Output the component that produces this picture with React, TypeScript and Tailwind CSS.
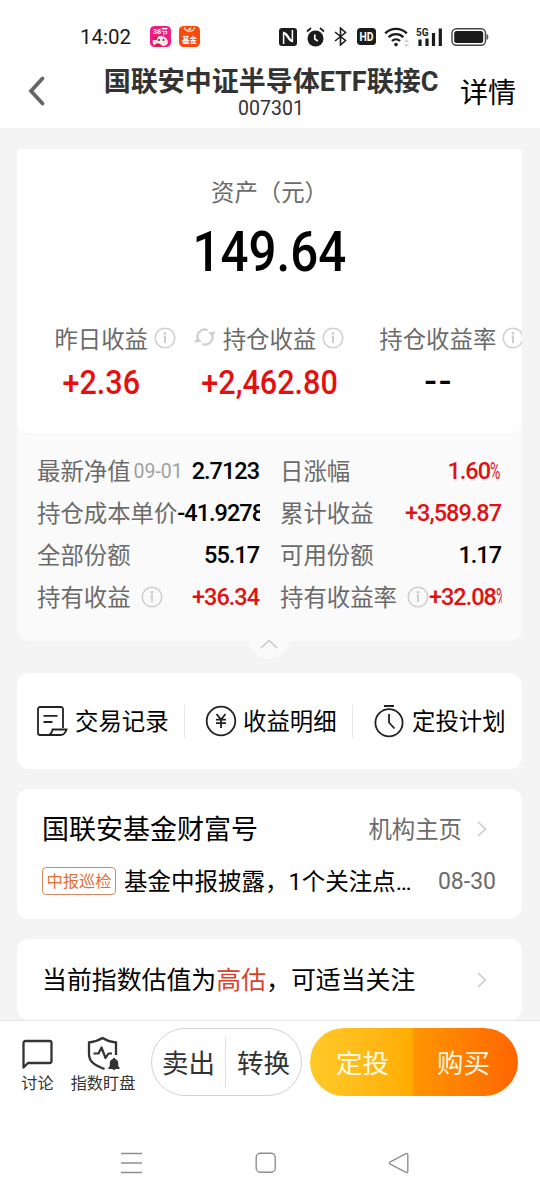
import type { ReactNode } from 'react';

type Tone = 'red' | 'black';

interface DetailItem {
  label: string;
  date?: string;
  info?: boolean;
  value: string;
  percent?: boolean;
  tone: Tone;
}

const leftDetails: DetailItem[] = [
  { label: '最新净值', date: '09-01', value: '2.7123', tone: 'black' },
  { label: '持仓成本单价', value: '-41.9278', tone: 'black' },
  { label: '全部份额', value: '55.17', tone: 'black' },
  { label: '持有收益', info: true, value: '+36.34', tone: 'red' },
];

const rightDetails: DetailItem[] = [
  { label: '日涨幅', value: '1.60', percent: true, tone: 'red' },
  { label: '累计收益', value: '+3,589.87', tone: 'red' },
  { label: '可用份额', value: '1.17', tone: 'black' },
  { label: '持有收益率', info: true, value: '+32.08', percent: true, tone: 'red' },
];

const toneClass: Record<Tone, string> = {
  red: 'text-[#df1112]',
  black: 'text-black',
};

function InfoIcon() {
  return (
    <svg width="22" height="22" viewBox="0 0 22 22" fill="none" className="shrink-0">
      <circle cx="11" cy="11" r="9.8" stroke="#cfcfcf" strokeWidth="1.5" />
      <circle cx="11" cy="6.3" r="1.4" fill="#cfcfcf" />
      <path d="M9.6 9.6H11V16" stroke="#cfcfcf" strokeWidth="2" />
    </svg>
  );
}

function RefreshIcon() {
  return (
    <svg width="22" height="20" viewBox="0 0 22 20" fill="none">
      <path d="M4.2 13A7.400 7.400 0 0 1 13.600 3M17.800 7A7.400 7.400 0 0 1 8.400 17" stroke="#cfcfcf" strokeWidth="2.2" />
      <path d="M14 5.200 21.800 4.400 18.600 9.600ZM8 14.800.2 15.600 3.400 10.400Z" fill="#cfcfcf" />
    </svg>
  );
}

function ChevronRight() {
  return (
    <svg width="10" height="16" viewBox="0 0 10 16" fill="none" className="shrink-0">
      <path d="m1 1 7.4 7L1 15" stroke="#cdcdcd" strokeWidth="1.7" />
    </svg>
  );
}

function StatusBar() {
  return (
    <div className="flex h-[58px] items-center pt-[15px] pl-20">
      <span className="w-[70px] pt-px text-[20.5px] leading-none text-[#1a1a1a]">14:02</span>
      <svg width="21" height="21" viewBox="0 0 21 21">
        <rect width="21" height="21" rx="4.5" fill="#ee1b82" />
        <text x="10.5" y="8" textAnchor="middle" fontSize="7" fontWeight="700" fill="#fff">
          38节
        </text>
        <path d="M3 18c-1.5-4 2-8 7-8s9 3.5 7.5 8l-3 2H6Z" fill="#fbe4e6" />
        <path d="M2.5 14c1-3 3.5-4.5 6-4l-2 4ZM5 20c0-2.5 2-3.500 5-2l3 2.500H5Z" fill="#d91b4d" />
        <circle cx="9" cy="14" r="1" fill="#333" />
        <circle cx="13.5" cy="14" r="1" fill="#333" />
      </svg>
      <svg width="21" height="21" viewBox="0 0 21 21" className="ml-2">
        <rect width="21" height="21" rx="4.5" fill="#fb4a0a" />
        <path d="M5.3 1.2a5.3 5.3 0 0 0 10.4 0" fill="none" stroke="#ffd9c4" strokeWidth="1.3" />
        <path d="m8 3.4 4.5-2.200L11 4.800Z" fill="#fff" />
        <text x="10.5" y="16.5" textAnchor="middle" fontSize="7.5" fontWeight="700" fill="#fff">
          基金
        </text>
      </svg>

      {/* NFC */}
      <svg width="18" height="18" viewBox="0 0 18 18" className="ml-[79px]">
        <rect width="18" height="18" rx="3" fill="#1c1c1c" />
        <path d="M4.600 16V4.500c4 .5 4.500 5.500 8 8M13.400 2V13.500c-4-.5-4.500-5.500-8-8" fill="none" stroke="#fff" strokeWidth="1.500" />
      </svg>
      {/* alarm */}
      <svg width="19" height="20" viewBox="0 0 19 20" className="ml-[9px]">
        <circle cx="9.5" cy="11.5" r="8" fill="#1c1c1c" />
        <path d="M1 4.500 5 1M18 4.500 14 1" stroke="#1c1c1c" strokeWidth="1.7" />
        <path d="M8.800 7.500v4.500l3 2" fill="none" stroke="#fff" strokeWidth="1.7" />
      </svg>
      {/* bluetooth */}
      <svg width="13" height="19" viewBox="0 0 13 19" className="ml-[9px]" fill="none">
        <path d="m1 5 10.500 8.500L6.500 18V1l5 4.500L1 14" stroke="#1c1c1c" strokeWidth="1.6" />
      </svg>
      <svg width="19" height="17" viewBox="0 0 19 17" className="ml-[10px]">
        <rect width="19" height="17" rx="3.5" fill="#1c1c1c" />
        <text x="9.5" y="12.8" textAnchor="middle" fontSize="12" fontWeight="700" fill="#fff" textLength="14" lengthAdjust="spacingAndGlyphs">
          HD
        </text>
      </svg>
      {/* wifi */}
      <svg width="26" height="20" viewBox="0 0 26 20" className="ml-[8px]" fill="none">
        <path d="M1.200 6.300a15.500 15.500 0 0 1 21.600 0M4.600 10.200a10.500 10.500 0 0 1 14.800 0M8 14a5.800 5.800 0 0 1 8 0" stroke="#1c1c1c" strokeWidth="2.4" />
        <circle cx="12" cy="17.600" r="1.8" fill="#1c1c1c" />
        <path d="m22.500 12 2.800 3h-5.600ZM22.500 20l2.800-3h-5.600Z" fill="#d3d3d3" />
      </svg>
      {/* mobile signal */}
      <svg width="27" height="20" viewBox="0 0 27 20" className="ml-[6px]">
        <path d="M4 12.500V19M11 11.500V19M17.500 6V19M24.300 1.500V19" stroke="#1c1c1c" strokeWidth="3.2" />
        <text x="0" y="9" fontSize="11" fontWeight="700" fill="#1c1c1c" textLength="12.5" lengthAdjust="spacingAndGlyphs">
          5G
        </text>
      </svg>
      <svg width="38" height="18" viewBox="0 0 38 18" className="ml-[8px]">
        <rect x="1" y="0.8" width="33.5" height="16.4" rx="4.5" fill="#fff" stroke="#444" strokeWidth="1.4" />
        <rect x="3.200" y="3" width="29" height="12" rx="2.500" fill="#1c1c1c" />
        <path d="M35.500 6c2.500.5 2.500 5.500 0 6Z" fill="#555" />
      </svg>
    </div>
  );
}

function Header() {
  return (
    <header className="flex h-[70px] items-start">
      <svg width="76" height="66" viewBox="0 0 76 66" fill="none" className="shrink-0">
        <path d="M42.500 20.500 31 33l11.500 12.500" stroke="#666" strokeWidth="3.8" strokeLinecap="round" />
      </svg>
      <div className="flex w-[390px] shrink-0 flex-col items-center pt-[9px] text-[#333]">
        <h1 className="text-[27px] leading-[30px] font-bold whitespace-nowrap">国联安中证半导体ETF联接C</h1>
        <p className="text-[19.5px] leading-6">007301</p>
      </div>
      <span className="-ml-1.5 pt-[22px] text-[28px] leading-7 text-black">详情</span>
    </header>
  );
}

function Metric({ label, leading, trailing, children }: { label: string; leading?: ReactNode; trailing?: ReactNode; children: ReactNode }) {
  return (
    <div className="flex flex-1 flex-col items-center">
      <div className="relative pt-[2px] text-[23.4px] leading-6 whitespace-nowrap text-[#6b6b6b]">
        {leading && <span className="absolute top-[1px] right-full mr-[7px]">{leading}</span>}
        {label}
        {trailing && <span className="absolute top-[1px] left-full ml-[6px]">{trailing}</span>}
      </div>
      {children}
    </div>
  );
}

function DetailRow({ item }: { item: DetailItem }) {
  return (
    <div className="flex h-[42px] items-center overflow-hidden whitespace-nowrap">
      <span className="shrink-0 pt-[3px] text-[23.4px] text-[#6b6b6b]">{item.label}</span>
      {item.date && <span className="ml-[3px] shrink-0 pt-px text-[19.5px] text-[#a0a0a0]">{item.date}</span>}
      {item.info && (
        <span className="-mt-px ml-[10px] shrink-0">
          <InfoIcon />
        </span>
      )}
      <span className={`ml-auto flex shrink-0 pt-[2px] pr-px text-[23.5px] font-medium tracking-[-1px] ${toneClass[item.tone]}`}>
        {item.value}
        {item.percent && <span className="w-[11px] origin-left scale-x-[0.6] font-normal">%</span>}
      </span>
    </div>
  );
}

function AssetCard() {
  return (
    <section className="relative h-[492px] rounded-xl bg-[#fafafa]">
      <div className="flex h-[284px] flex-col items-center overflow-hidden rounded-t-sm rounded-b-xl bg-white pt-8">
        <p className="text-[23.4px] leading-6 text-[#6b6b6b]">资产（元）</p>
        <p className="mt-[15px] scale-x-[0.88] text-[56px] leading-[64px] font-medium text-black">149.64</p>
        <div className="mt-[42px] flex w-full">
          <Metric label="昨日收益" trailing={<InfoIcon />}>
            <p className="mt-[11px] scale-x-[0.94] text-[32.5px] leading-10 font-medium text-[#e60f10]">+2.36</p>
          </Metric>
          <Metric label="持仓收益" leading={<RefreshIcon />} trailing={<InfoIcon />}>
            <p className="mt-[11px] scale-x-[0.94] text-[32.5px] leading-10 font-medium text-[#e60f10]">+2,462.80</p>
          </Metric>
          <Metric label="持仓收益率" trailing={<InfoIcon />}>
            <p className="mt-[10px] scale-x-[1.15] pl-0.5 text-[32.5px] leading-10 font-medium tracking-[1.5px] text-black">--</p>
          </Metric>
        </div>
      </div>
      <div className="grid grid-cols-[223px_222px] gap-x-5 px-5 pt-[17px]">
        <div>
          {leftDetails.map((item) => (
            <DetailRow key={item.label} item={item} />
          ))}
        </div>
        <div>
          {rightDetails.map((item) => (
            <DetailRow key={item.label} item={item} />
          ))}
        </div>
      </div>
      <div className="absolute bottom-[-18px] left-[231px] flex h-[42px] w-[42px] items-center justify-center rounded-full bg-[#fafafa] pt-[12px]">
        <svg width="18" height="10" viewBox="0 0 18 10" fill="none">
          <path d="m1 9 8-7.500L17 9" stroke="#c8c8c8" strokeWidth="1.5" />
        </svg>
      </div>
    </section>
  );
}

function ActionsCard() {
  return (
    <section className="mt-8 flex h-24 items-center rounded-xl bg-white text-[23.4px] whitespace-nowrap text-black">
      <div className="flex h-[33px] w-[168px] items-center border-r border-[#e6e6e6] pl-5">
        <svg width="31" height="30" viewBox="0 0 31 30" fill="none" className="mr-[7px]">
          <path d="M26 22V3a2 2 0 0 0-2-2H3a2 2 0 0 0-2 2v24a2 2 0 0 0 2 2h20.500c3.500 0 5-2 6-5.500H15.500c-.5 3-1.500 5-4 5.500" stroke="#222" strokeWidth="1.8" />
          <path d="M6.500 9.800h14M6.500 16h9" stroke="#222" strokeWidth="1.8" />
        </svg>
        <span className="pt-[3px]">交易记录</span>
      </div>
      <div className="flex h-[33px] w-[168px] items-center border-r border-[#e6e6e6] pl-5">
        <svg width="32" height="32" viewBox="0 0 32 32" fill="none" className="mr-[6px]">
          <circle cx="16" cy="16" r="14.3" stroke="#222" strokeWidth="1.8" />
          <path d="m11.500 9 4.500 5.500L20.500 9M11 14.600h10M11 18.200h10M16 14.500v8.500" stroke="#222" strokeWidth="1.8" />
        </svg>
        <span className="pt-[3px]">收益明细</span>
      </div>
      <div className="flex h-[33px] items-center pl-[21px]">
        <svg width="30" height="34" viewBox="0 0 30 34" fill="none" className="mr-2">
          <circle cx="15" cy="18.700" r="13.6" stroke="#222" strokeWidth="1.8" />
          <path d="M10 2h10M15 10v8.500l5.500 6" stroke="#222" strokeWidth="1.8" />
        </svg>
        <span className="pt-[3px]">定投计划</span>
      </div>
    </section>
  );
}

function FundHouseCard() {
  return (
    <section className="mt-5 h-[130px] rounded-xl bg-white pr-[26px] pl-[25px] whitespace-nowrap">
      <div className="flex h-20 items-center">
        <h2 className="pt-[3px] text-[27px] text-black">国联安基金财富号</h2>
        <span className="mr-[15px] ml-auto pt-[3px] text-[23.4px] text-[#6b6b6b]">机构主页</span>
        <span className="mr-[9px]">
          <ChevronRight />
        </span>
      </div>
      <div className="-mt-0.5 flex h-7 items-center">
        <span className="flex h-7 w-[74px] shrink-0 items-center justify-center rounded border border-[#d88a62] pt-[2px] text-[16.3px] text-[#e0703a]">
          中报巡检
        </span>
        <span className="ml-2 pt-[3px] text-[23.5px] text-black">基金中报披露，1个关注点…</span>
        <span className="ml-auto pt-[3px] text-[23px] text-[#6b6b6b]">08-30</span>
      </div>
    </section>
  );
}

function BottomBar() {
  return (
    <footer className="h-[180px] border-t border-[#e6e6e6] bg-white text-[#333]">
      <div className="flex pt-[7px]">
        <div className="flex w-[75px] flex-col items-center pt-[11px]">
          <svg width="31" height="32" viewBox="0 0 31 32" fill="none">
            <path d="M1.500 28.500V4a2 2 0 0 1 2-2h24a2 2 0 0 1 2 2v18a2 2 0 0 1-2 2H6Z" stroke="#333" strokeWidth="2.3" strokeLinejoin="round" />
          </svg>
          <span className="mt-[3px] text-[16.2px] leading-5">讨论</span>
        </div>
        <div className="flex w-[56px] flex-col items-center pt-2">
          <svg width="34" height="36" viewBox="0 0 34 36" fill="none">
            <path d="M18.500 33 C9 29.500 3 26 3 18V6.500C8 6 12.500 4.500 16.500 2c4 2.500 8 4 13.500 4.500V19" stroke="#333" strokeWidth="2.3" />
            <path d="M7.500 17.500h5l3-6 4 10.500 3-4.500h3.500" stroke="#333" strokeWidth="2.2" strokeLinejoin="round" />
            <path d="M22.500 33v-1.500l1.300-1.500v-3a4.200 4.200 0 0 1 3.200-4V22h2v1a4.200 4.200 0 0 1 3.200 4v3l1.300 1.500V33h-4l-1.500 1.500L26.500 33Z" fill="#333" />
          </svg>
          <span className="mt-[2px] text-[16.2px] leading-5 whitespace-nowrap">指数盯盘</span>
        </div>
        <div className="ml-5 flex h-[68px] w-[151px] items-center rounded-full border border-[#d2d2d2] text-[26.5px]">
          <span className="flex h-[51px] w-[74px] items-center justify-center border-r border-[#e0e0e0] pt-[3px]">卖出</span>
          <span className="flex-1 pt-[3px] text-center">转换</span>
        </div>
        <div className="ml-2 flex h-[68px] w-[208px] overflow-hidden rounded-full text-[26.5px] text-[#fffbe3]">
          <span className="flex flex-1 items-center justify-center bg-linear-to-r from-[#ffca28] to-[#ffac00] pt-[3px] pl-0.5">定投</span>
          <span className="flex flex-1 items-center justify-center bg-linear-to-r from-[#ff9500] to-[#ff6500] pt-[3px] pr-1">购买</span>
        </div>
      </div>
      <nav className="mt-[56px] flex items-center pl-[121px]">
        <svg width="22" height="22" viewBox="0 0 22 22" fill="none">
          <path d="M0 1.500h21M0 11h21M0 20.500h21" stroke="#8f8f8f" strokeWidth="1.4" />
        </svg>
        <svg width="22" height="22" viewBox="0 0 22 22" fill="none" className="ml-[112px]">
          <rect x="1.2" y="1.2" width="19" height="19" rx="4" stroke="#8f8f8f" strokeWidth="1.4" />
        </svg>
        <svg width="22" height="22" viewBox="0 0 22 22" fill="none" className="ml-[111px]">
          <path d="M18 1.600 2.300 9.800a1.300 1.300 0 0 0 0 2.400L18 20.400a1.200 1.200 0 0 0 1.800-1V2.600A1.200 1.200 0 0 0 18 1.600Z" stroke="#8f8f8f" strokeWidth="1.4" />
        </svg>
      </nav>
    </footer>
  );
}

export default function App() {
  return (
    <div className="flex h-[1200px] w-[540px] flex-col overflow-hidden bg-[#f4f4f4] font-[Roboto,'Noto_Sans_CJK_SC',sans-serif]">
      <div className="h-32 shrink-0 bg-white">
        <StatusBar />
        <Header />
      </div>
      <main className="h-[892px] shrink-0 overflow-hidden pt-[21px] pr-[18px] pl-[17px]">
        <AssetCard />
        <ActionsCard />
        <FundHouseCard />
        <section className="mt-5 flex h-[81px] items-center rounded-xl bg-white pr-[35px] pl-[25px] text-[24.9px] whitespace-nowrap text-black">
          <p className="pt-[3px]">
            当前指数估值为<span className="text-[#d9432c]">高估</span>，可适当关注
          </p>
          <span className="ml-auto">
            <ChevronRight />
          </span>
        </section>
      </main>
      <BottomBar />
    </div>
  );
}
